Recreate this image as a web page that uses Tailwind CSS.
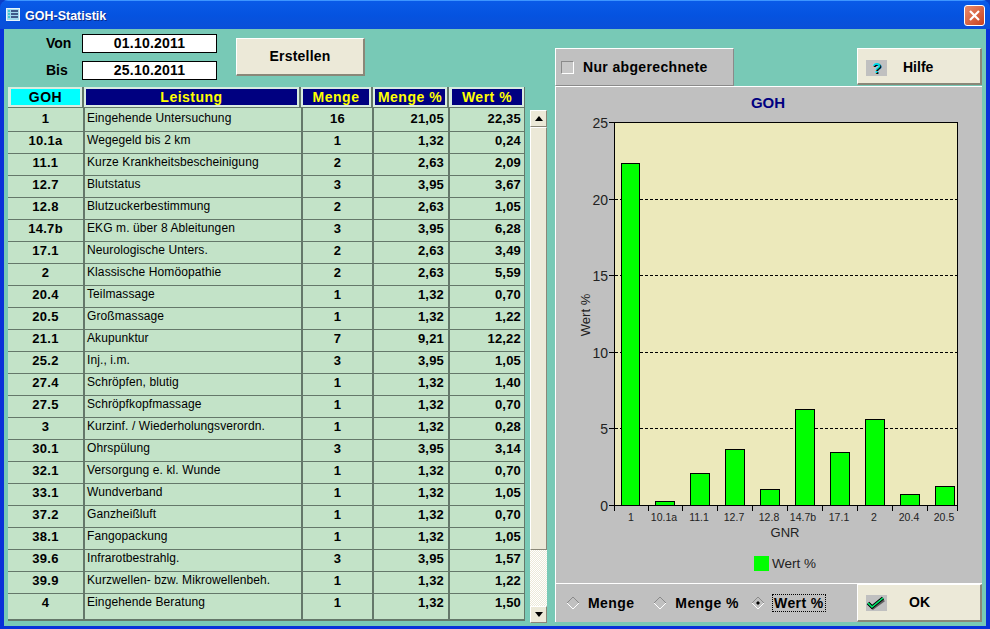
<!DOCTYPE html>
<html lang="de">
  <head>
    <meta charset="UTF-8" />
    <title>GOH-Statistik</title>
    <script src="https://cdn.jsdelivr.net/npm/@tailwindcss/browser@4"></script>
  </head>
  <body class="bg-[#0a3fc8] font-['Liberation_Sans',Arial,sans-serif] overflow-hidden">
    <div class="w-[990px] h-[629px] flex flex-col bg-[#0831d9] rounded-t-lg overflow-hidden">
      <!-- title bar -->
      <div class="h-[29px] shrink-0 flex items-center pl-[6px] pr-[5px] bg-gradient-to-b from-[#0a5ae8] via-[#0553e0] to-[#0a4fd8] border-t border-[#3d95ff]">
        <svg width="14" height="14" viewBox="0 0 14 14" class="mr-[5px]">
          <rect x="0.5" y="0.5" width="13" height="12" fill="#9fd8ee" stroke="#e8f4fb" />
          <path d="M2 3h2M2 6h2M2 9h2" stroke="#20c0c8" stroke-width="1.4" />
          <path d="M5 3h7M5 6h7M5 9h7" stroke="#20306a" stroke-width="1.4" />
        </svg>
        <span class="text-white font-bold text-[12.5px] pt-[2px] [text-shadow:1px_1px_0_#0a2a8a]">GOH-Statistik</span>
        <button class="ml-auto w-[21px] h-[21px] rounded-[3px] border border-white bg-gradient-to-br from-[#e88a6a] to-[#c8401a] flex items-center justify-center">
          <svg width="13" height="13" viewBox="0 0 13 13"><path d="M2 2l9 9M11 2l-9 9" stroke="#fff" stroke-width="2.2" /></svg>
        </button>
      </div>

      <!-- client -->
      <div class="flex-1 mx-[4px] mb-[3px] bg-[#78c9b6] flex pl-[4px] pr-[4px] min-h-0">
        <!-- left side -->
        <div class="w-[540px] shrink-0 flex flex-col">
          <div class="h-[58px] flex">
            <div class="w-[74px] flex flex-col pt-[5px] text-[14px] font-bold text-black">
              <div class="h-[27px] leading-[19px] pl-[38px]">Von</div>
              <div class="h-[19px] leading-[19px] pl-[38px]">Bis</div>
            </div>
            <div class="w-[135px] flex flex-col pt-[5px] tracking-[0.2px]">
              <div class="h-[19px] mb-[8px] bg-white border border-black text-center text-[14px] font-bold leading-[17px]">01.10.2011</div>
              <div class="h-[19px] bg-white border border-black text-center text-[14px] font-bold leading-[17px]">25.10.2011</div>
            </div>
            <button class="ml-[19px] mt-[9px] w-[129px] h-[38px] bg-[#ece9d8] border-t border-l border-white border-r-2 border-b-2 border-r-[#8a8778] border-b-[#8a8778] text-[14px] font-bold tracking-[0.2px]">Erstellen</button>
          </div>
          <div class="flex flex-1 min-h-0">
            <div class="w-[517px] h-[534px] flex flex-col bg-[#64786a] border-b-2 border-r border-[#64786a]" id="grid">
              <div id="head" class="grid grid-cols-[76px_217px_72px_76px_75px] h-[21px] shrink-0 bg-[#d8ece0] text-[14px] tracking-[0.5px] font-bold">
                <div class="pl-[3px] pr-[2px] py-[2px] border-r-2 border-[#64786a] border-b-2"><div class="h-full bg-[#00ffff] text-black text-center leading-[16px]">GOH</div></div>
                <div class="pl-[2px] pr-[2px] py-[2px] border-r-2 border-[#64786a] border-b-2"><div class="h-full bg-[#000080] text-[#ffff00] text-center leading-[16px]">Leistung</div></div>
                <div class="pl-[2px] pr-[2px] py-[2px] border-r-2 border-[#64786a] border-b-2"><div class="h-full bg-[#000080] text-[#ffff00] text-center leading-[16px]">Menge</div></div>
                <div class="pl-[2px] pr-[2px] py-[2px] border-r-2 border-[#64786a] border-b-2"><div class="h-full bg-[#000080] text-[#ffff00] text-center leading-[16px]">Menge %</div></div>
                <div class="pl-[3px] pr-[2px] py-[2px] border-[#64786a] border-b-2"><div class="h-full bg-[#000080] text-[#ffff00] text-center leading-[16px]">Wert %</div></div>
              </div>
              <div id="rows" class="flex-1 flex flex-col"></div>
            </div>
            <!-- scrollbar -->
            <div class="ml-[5px] mt-[23px] w-[17px] h-[513px] flex flex-col">
              <div class="h-[17px] bg-[#ece9d8] border-t border-l border-white border-r border-b border-r-[#8a8778] border-b-[#8a8778] flex items-center justify-center">
                <svg width="8" height="5" viewBox="0 0 8 5"><path d="M4 0l4 5H0z" fill="#000" /></svg>
              </div>
              <div class="h-[423px] bg-[#ece9d8] border-t border-l border-white border-r border-b border-r-[#8a8778] border-b-[#8a8778]"></div>
              <div class="flex-1 bg-[repeating-conic-gradient(#ece9d8_0_25%,#fff_0_50%)] bg-[size:2px_2px]"></div>
              <div class="h-[17px] bg-[#ece9d8] border-t border-l border-white border-r border-b border-r-[#8a8778] border-b-[#8a8778] flex items-center justify-center">
                <svg width="8" height="5" viewBox="0 0 8 5"><path d="M4 5l4-5H0z" fill="#000" /></svg>
              </div>
            </div>
          </div>
        </div>

        <!-- right side -->
        <div class="ml-[7px] w-[427px] mt-[19px] mb-[4px] flex flex-col">
          <div class="flex h-[38px] shrink-0">
            <div class="w-[179px] bg-[#c0c0c0] border-t border-l border-white border-r border-b border-r-[#8a8a8a] border-b-[#8a8a8a] flex items-center pl-[5px]">
              <span class="w-[13px] h-[13px] border border-[#8a8a8a] border-r-white border-b-white bg-[#c8c8c8] mr-[9px]"></span>
              <span class="text-[14px] font-bold tracking-[0.35px]">Nur abgerechnete</span>
            </div>
            <button class="ml-[123px] w-[125px] h-[37px] bg-[#ece9d8] border-t border-l border-white border-r-2 border-b-2 border-r-[#8a8778] border-b-[#8a8778] flex items-center pl-[8px] pt-[3px]">
              <span class="w-[21px] h-[16px] bg-[#c0c0c0] text-[#00d8e8] text-[15px] font-bold leading-[16px] text-center [text-shadow:1px_1px_0_#000]">?</span>
              <span class="ml-[16px] text-[14px] font-bold">Hilfe</span>
            </button>
          </div>
          <div class="flex-1 bg-[#c0c0c0] border-t border-l border-white flex flex-col min-h-0">
            <svg id="chart" width="426" height="496" viewBox="556 87 426 496" class="shrink-0 font-['Liberation_Sans']"></svg>
            <div class="flex-1 flex border-t border-white">
              <div class="w-[301px] flex items-center text-[14px] font-bold tracking-[0.4px]">
                <svg width="14" height="14" viewBox="0 0 14 14" class="ml-[10px] shrink-0"><path d="M7 1l6 6-6 6-6-6z" fill="none" stroke="#8a8a8a" /><path d="M7 13l6-6" stroke="#fff" /><path d="M1 7l6 6" stroke="#fff" /></svg>
                <span class="ml-[8px]">Menge</span>
                <svg width="14" height="14" viewBox="0 0 14 14" class="ml-[19px] shrink-0"><path d="M7 1l6 6-6 6-6-6z" fill="none" stroke="#8a8a8a" /><path d="M7 13l6-6" stroke="#fff" /><path d="M1 7l6 6" stroke="#fff" /></svg>
                <span class="ml-[8px]">Menge %</span>
                <svg width="14" height="14" viewBox="0 0 14 14" class="ml-[12px] shrink-0"><path d="M7 1l6 6-6 6-6-6z" fill="none" stroke="#8a8a8a" /><path d="M7 13l6-6" stroke="#fff" /><path d="M1 7l6 6" stroke="#fff" /><path d="M7 5l2 2-2 2-2-2z" fill="#000" /></svg>
                <span class="ml-[7px] w-[54px] h-[18px] text-center border border-dotted border-black leading-[16px]">Wert %</span>
              </div>
              <button class="w-[125px] bg-[#ece9d8] border-t border-l border-white border-r-2 border-b-2 border-r-[#8a8778] border-b-[#8a8778] flex items-center pl-[8px]">
                <span class="w-[21px] h-[16px] bg-[#c0c0c0] flex items-center justify-center">
                  <svg width="21" height="16" viewBox="0 0 21 16">
                    <path d="M3 9l4 4L18 5" fill="none" stroke="#606060" stroke-width="3" />
                    <path d="M2 8l4 4L17 3" fill="none" stroke="#000" stroke-width="3.4" />
                    <path d="M2 8l4 4L17 3" fill="none" stroke="#00f070" stroke-width="1.6" />
                  </svg>
                </span>
                <span class="ml-[22px] text-[14px] font-bold">OK</span>
              </button>
            </div>
          </div>
        </div>
      </div>
    </div>

    <script>
      const data = [
        ["1", "Eingehende Untersuchung", "16", "21,05", "22,35"],
        ["10.1a", "Wegegeld bis 2 km", "1", "1,32", "0,24"],
        ["11.1", "Kurze Krankheitsbescheinigung", "2", "2,63", "2,09"],
        ["12.7", "Blutstatus", "3", "3,95", "3,67"],
        ["12.8", "Blutzuckerbestimmung", "2", "2,63", "1,05"],
        ["14.7b", "EKG m. über 8 Ableitungen", "3", "3,95", "6,28"],
        ["17.1", "Neurologische Unters.", "2", "2,63", "3,49"],
        ["2", "Klassische Homöopathie", "2", "2,63", "5,59"],
        ["20.4", "Teilmassage", "1", "1,32", "0,70"],
        ["20.5", "Großmassage", "1", "1,32", "1,22"],
        ["21.1", "Akupunktur", "7", "9,21", "12,22"],
        ["25.2", "Inj., i.m.", "3", "3,95", "1,05"],
        ["27.4", "Schröpfen, blutig", "1", "1,32", "1,40"],
        ["27.5", "Schröpfkopfmassage", "1", "1,32", "0,70"],
        ["3", "Kurzinf. / Wiederholungsverordn.", "1", "1,32", "0,28"],
        ["30.1", "Ohrspülung", "3", "3,95", "3,14"],
        ["32.1", "Versorgung e. kl. Wunde", "1", "1,32", "0,70"],
        ["33.1", "Wundverband", "1", "1,32", "1,05"],
        ["37.2", "Ganzheißluft", "1", "1,32", "0,70"],
        ["38.1", "Fangopackung", "1", "1,32", "1,05"],
        ["39.6", "Infrarotbestrahlg.", "3", "3,95", "1,57"],
        ["39.9", "Kurzwellen- bzw. Mikrowellenbeh.", "1", "1,32", "1,22"],
        ["4", "Eingehende Beratung", "1", "1,32", "1,50"],
      ];

      document.getElementById("rows").innerHTML = data
        .map((r, i) => {
          const rowCls = i === 0 ? "h-[23px] leading-[21px]" : i === data.length - 1 ? "flex-1 border-t border-[#64786a] leading-[17px]" : "h-[22px] border-t border-[#64786a] leading-[17px]";
          return `
        <div class="grid grid-cols-[77px_218px_71px_76px_74px] ${rowCls} bg-[#c3e3c8] text-black">
          <div class="border-r-2 border-[#64786a] text-center font-bold text-[13px] tracking-[0.3px]">${r[0]}</div>
          <div class="border-r-2 border-[#64786a] pl-[2px] text-[12px] tracking-[0.1px] whitespace-nowrap">${r[1]}</div>
          <div class="border-r-2 border-[#64786a] text-center font-bold text-[13px] tracking-[0.3px]">${r[2]}</div>
          <div class="border-r-2 border-[#64786a] text-right pr-[4px] font-bold text-[13px] tracking-[0.2px]">${r[3]}</div>
          <div class="text-right pr-[3px] font-bold text-[13px] tracking-[0.2px]">${r[4]}</div>
        </div>`;
        })
        .join("");

      // chart, drawn in window coordinates
      const bars = [
        ["1", 621, 22.35], ["10.1a", 655, 0.24], ["11.1", 690, 2.09], ["12.7", 725, 3.67], ["12.8", 760, 1.05],
        ["14.7b", 795, 6.28], ["17.1", 830, 3.49], ["2", 865, 5.59], ["20.4", 900, 0.70], ["20.5", 935, 1.22],
      ];
      const y0 = 505, unit = 15.32;
      let s = `<text x="768" y="108" text-anchor="middle" font-size="15" font-weight="700" fill="#000080">GOH</text>`;
      s += `<rect x="614.5" y="122.5" width="343" height="383" fill="#ece9bb" stroke="#000" />`;
      [5, 10, 15, 20].forEach((v) => {
        const y = Math.round(y0 - v * unit) + 0.5;
        s += `<path d="M615 ${y}H957" stroke="#000" stroke-dasharray="3 2" />`;
      });
      [0, 5, 10, 15, 20, 25].forEach((v) => {
        const y = Math.round(y0 - v * unit) + 0.5;
        s += `<path d="M609 ${y}H615" stroke="#000" />`;
        s += `<text x="608" y="${y + 5}" text-anchor="end" font-size="14" fill="#222">${v}</text>`;
      });
      bars.forEach((b) => {
        const top = Math.round(y0 - b[2] * unit);
        s += `<rect x="${b[1] + 0.5}" y="${top + 0.5}" width="${b[0] === "1" ? 18 : 19}" height="${y0 - top}" fill="#00ff00" stroke="#000" />`;
      });
      [614, 648, 682, 717, 752, 787, 822, 857, 892, 927, 957].forEach((x) => {
        s += `<path d="M${x + 0.5} 505V511" stroke="#000" />`;
      });
      const labelX = [631, 664, 699, 734, 769, 803, 839, 874, 909, 944];
      bars.forEach((b, i) => {
        s += `<text x="${labelX[i]}" y="520.5" text-anchor="middle" font-size="10.5" fill="#222">${b[0]}</text>`;
      });
      s += `<text x="785" y="537" text-anchor="middle" font-size="13" fill="#222">GNR</text>`;
      s += `<text transform="translate(590 315) rotate(-90)" text-anchor="middle" font-size="13" fill="#222">Wert %</text>`;
      s += `<rect x="754" y="556" width="15" height="15" fill="#00ff00" />`;
      s += `<text x="772" y="568" font-size="13.5" fill="#222">Wert %</text>`;
      document.getElementById("chart").innerHTML = s;
    </script>
  </body>
</html>
